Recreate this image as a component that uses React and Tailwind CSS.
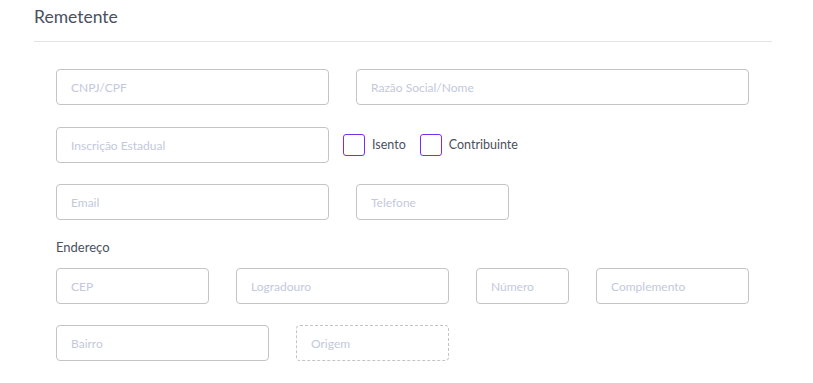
const Field = ({ placeholder, w, dashed }) => (
  <input
    placeholder={placeholder}
    readOnly
    className={`h-[36px] ${w} rounded-[4px] border ${
      dashed ? 'border-dashed border-[#c4c4c4]' : 'border-[#c4c4c4]'
    } bg-white px-[14px] text-[12px] text-[#4b5060] outline-none placeholder:text-[#c3c9dc]`}
  />
)

const Check = ({ label }) => (
  <label className="flex items-center gap-[7px]">
    <span className="h-[22px] w-[22px] rounded-[3px] border border-[#7c2cf2] bg-white" />
    <span className="text-[12.5px] text-[#4b5060]">{label}</span>
  </label>
)

export default function App() {
  return (
    <div className="min-h-screen bg-white font-['Lato','Liberation_Sans',sans-serif]">
      <div className="ml-[34px] w-[738px] pt-[5px]">
        <h1 className="text-[17.5px] leading-[24px] text-[#4a5060]">Remetente</h1>
        <div className="mt-[12px] h-px w-full bg-[#e4e4e4]" />
      </div>
      <div className="ml-[56px] mt-[27px] flex flex-col">
        <div className="flex gap-[27px]">
          <Field placeholder="CNPJ/CPF" w="w-[273px]" />
          <Field placeholder="Razão Social/Nome" w="w-[393px]" />
        </div>
        <div className="mt-[22px] flex items-center">
          <Field placeholder="Inscrição Estadual" w="w-[273px]" />
          <div className="ml-[14px] flex items-center gap-[14px]">
            <Check label="Isento" />
            <Check label="Contribuinte" />
          </div>
        </div>
        <div className="mt-[21px] flex gap-[27px]">
          <Field placeholder="Email" w="w-[273px]" />
          <Field placeholder="Telefone" w="w-[153px]" />
        </div>
        <div className="mt-[18px] text-[13px] leading-[18px] text-[#4a5060]">Endereço</div>
        <div className="mt-[12px] flex gap-[27px]">
          <Field placeholder="CEP" w="w-[153px]" />
          <Field placeholder="Logradouro" w="w-[213px]" />
          <Field placeholder="Número" w="w-[93px]" />
          <Field placeholder="Complemento" w="w-[153px]" />
        </div>
        <div className="mt-[21px] flex gap-[27px]">
          <Field placeholder="Bairro" w="w-[213px]" />
          <Field placeholder="Origem" w="w-[153px]" dashed />
        </div>
      </div>
    </div>
  )
}
